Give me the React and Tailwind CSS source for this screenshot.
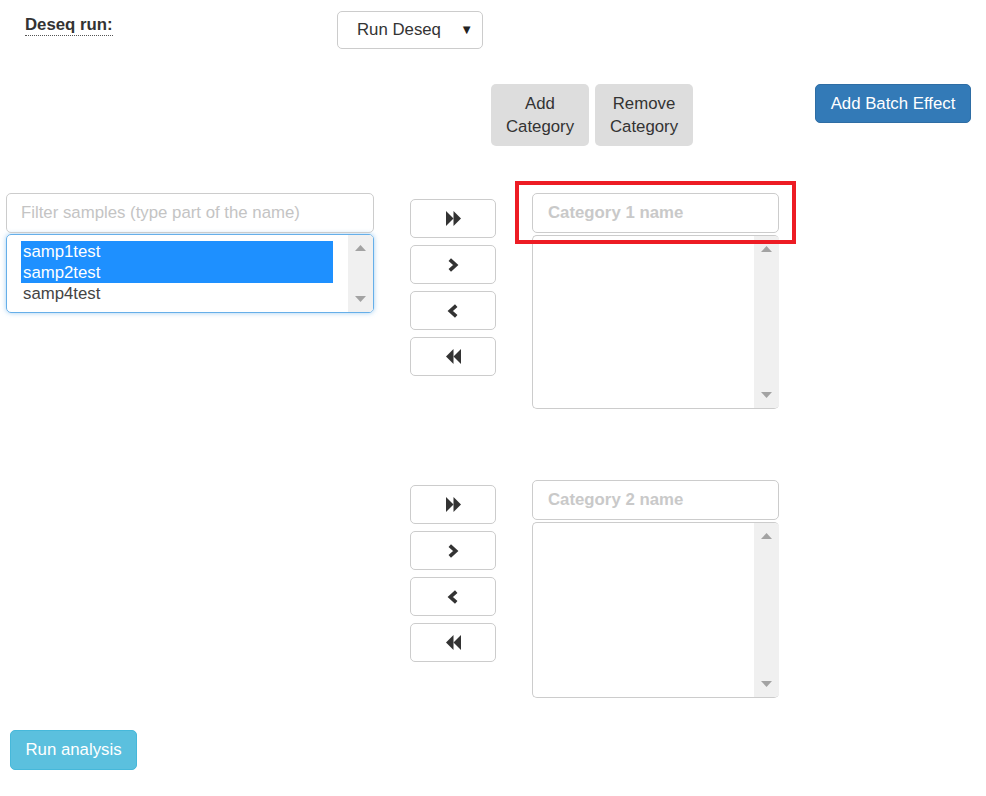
const font = "font-['Liberation_Sans',Arial,sans-serif]";

function FastIcon({ back }) {
  return (
    <svg width="15" height="15" viewBox="0 0 14 14" className={back ? 'rotate-180' : ''}>
      <polygon points="0,0 7,7 0,14" fill="#333" />
      <polygon points="7,0 14,7 7,14" fill="#333" />
    </svg>
  );
}

function Chevron({ left }) {
  return (
    <svg width="12" height="14" viewBox="0 0 11 13" className={left ? 'rotate-180' : ''}>
      <path d="M2.5 1.5 L8 6.5 L2.5 11.5" fill="none" stroke="#333" strokeWidth="3.4" />
    </svg>
  );
}

function Tri({ down }) {
  return (
    <svg width="11" height="6" viewBox="0 0 11 6" className={down ? 'rotate-180' : ''}>
      <polygon points="0,6 5.5,0 11,6" fill="#a3a3a3" />
    </svg>
  );
}

function Scrollbar({ pad }) {
  return (
    <div className={`w-[25px] bg-[#f0f0f0] flex flex-col items-center justify-between ${pad}`}>
      <Tri />
      <Tri down />
    </div>
  );
}

function MoveButtons({ top }) {
  const btn = 'h-[39px] w-[86px] border border-[#ccc] rounded-[5px] bg-white flex items-center justify-center';
  return (
    <div className={`ml-[36px] w-[86px] flex flex-col gap-[7px] ${top}`}>
      <button className={btn}><FastIcon /></button>
      <button className={btn}><Chevron /></button>
      <button className={btn}><Chevron left /></button>
      <button className={btn}><FastIcon back /></button>
    </div>
  );
}

function CategoryBox({ name, listH, marked }) {
  return (
    <div className="ml-[36px] w-[247px]">
      <div className="relative">
        <input
          readOnly
          placeholder={name}
          className="w-full h-[40px] border border-[#ccc] rounded-[5px] pl-[15px] font-bold text-[16.8px] placeholder:text-[#c9c9c9] outline-none"
        />
        {marked && (
          <div className="absolute -left-[17px] -top-[12px] w-[281px] h-[63px] border-4 border-[#ed1c24] pointer-events-none" />
        )}
      </div>
      <div className={`mt-[2px] flex border border-[#ccc] border-r-0 rounded-[5px] overflow-hidden bg-white ${listH}`}>
        <div className="flex-1" />
        <Scrollbar pad="py-[10px]" />
      </div>
    </div>
  );
}

export default function App() {
  const samples = [
    { name: 'samp1test', sel: true },
    { name: 'samp2test', sel: true },
    { name: 'samp4test', sel: false },
  ];

  return (
    <div className={`w-[986px] h-[796px] bg-white text-[#333] text-[16.8px] ${font}`}>
      {/* header */}
      <div className="flex pt-[11px]">
        <div className="w-[337px] pl-[25px] pt-[1px]">
          <span className="inline-block font-bold leading-[20px] border-b border-dotted border-[#555]">Deseq run:</span>
        </div>
        <div className="w-[146px] h-[38px] border border-[#ccc] rounded-[5px] flex items-center justify-between pl-[19px] pr-[9px]">
          <span>Run Deseq</span>
          <span className="text-[13px] text-[#222]">▼</span>
        </div>
      </div>

      {/* category actions */}
      <div className="flex items-start mt-[35px] pl-[491px]">
        <button className="w-[98px] h-[62px] bg-[#ddd] rounded-[5px] leading-[23.5px]">Add<br />Category</button>
        <button className="ml-[6px] w-[98px] h-[62px] bg-[#ddd] rounded-[5px] leading-[23.5px]">Remove<br />Category</button>
        <button className="ml-[122px] w-[156px] h-[39px] bg-[#337ab7] border border-[#2e6da4] text-white rounded-[5px]">Add Batch Effect</button>
      </div>

      {/* category 1 */}
      <div className="flex items-start mt-[47px]">
        <div className="ml-[6px] w-[368px]">
          <input
            readOnly
            placeholder="Filter samples (type part of the name)"
            className="w-full h-[40px] border border-[#ccc] rounded-[5px] pl-[14px] text-[16.8px] placeholder:text-[#c4c4c4] outline-none"
          />
          <div className="mt-[1px] h-[79px] flex border border-[#66afe9] rounded-[5px] overflow-hidden shadow-[0_0_5px_rgba(102,175,233,0.6)]">
            <div className="flex-1 pl-[14px] pt-[6px]">
              <div className="w-[312px]">
                {samples.map((s) => (
                  <div
                    key={s.name}
                    className={`h-[21px] leading-[21px] px-[2px] ${s.sel ? 'bg-[#1e90ff] text-white' : 'text-[#444]'}`}
                  >
                    {s.name}
                  </div>
                ))}
              </div>
            </div>
            <Scrollbar pad="py-[10px]" />
          </div>
        </div>
        <MoveButtons top="mt-[6px]" />
        <CategoryBox name="Category 1 name" listH="h-[174px]" marked />
      </div>

      {/* category 2 */}
      <div className="flex items-start mt-[71px]">
        <div className="ml-[6px] w-[368px]" />
        <MoveButtons top="mt-[5px]" />
        <CategoryBox name="Category 2 name" listH="h-[176px]" />
      </div>

      <button className="mt-[32px] ml-[10px] w-[127px] h-[40px] bg-[#5bc0de] border border-[#46b8da] text-white rounded-[5px]">
        Run analysis
      </button>
    </div>
  );
}
